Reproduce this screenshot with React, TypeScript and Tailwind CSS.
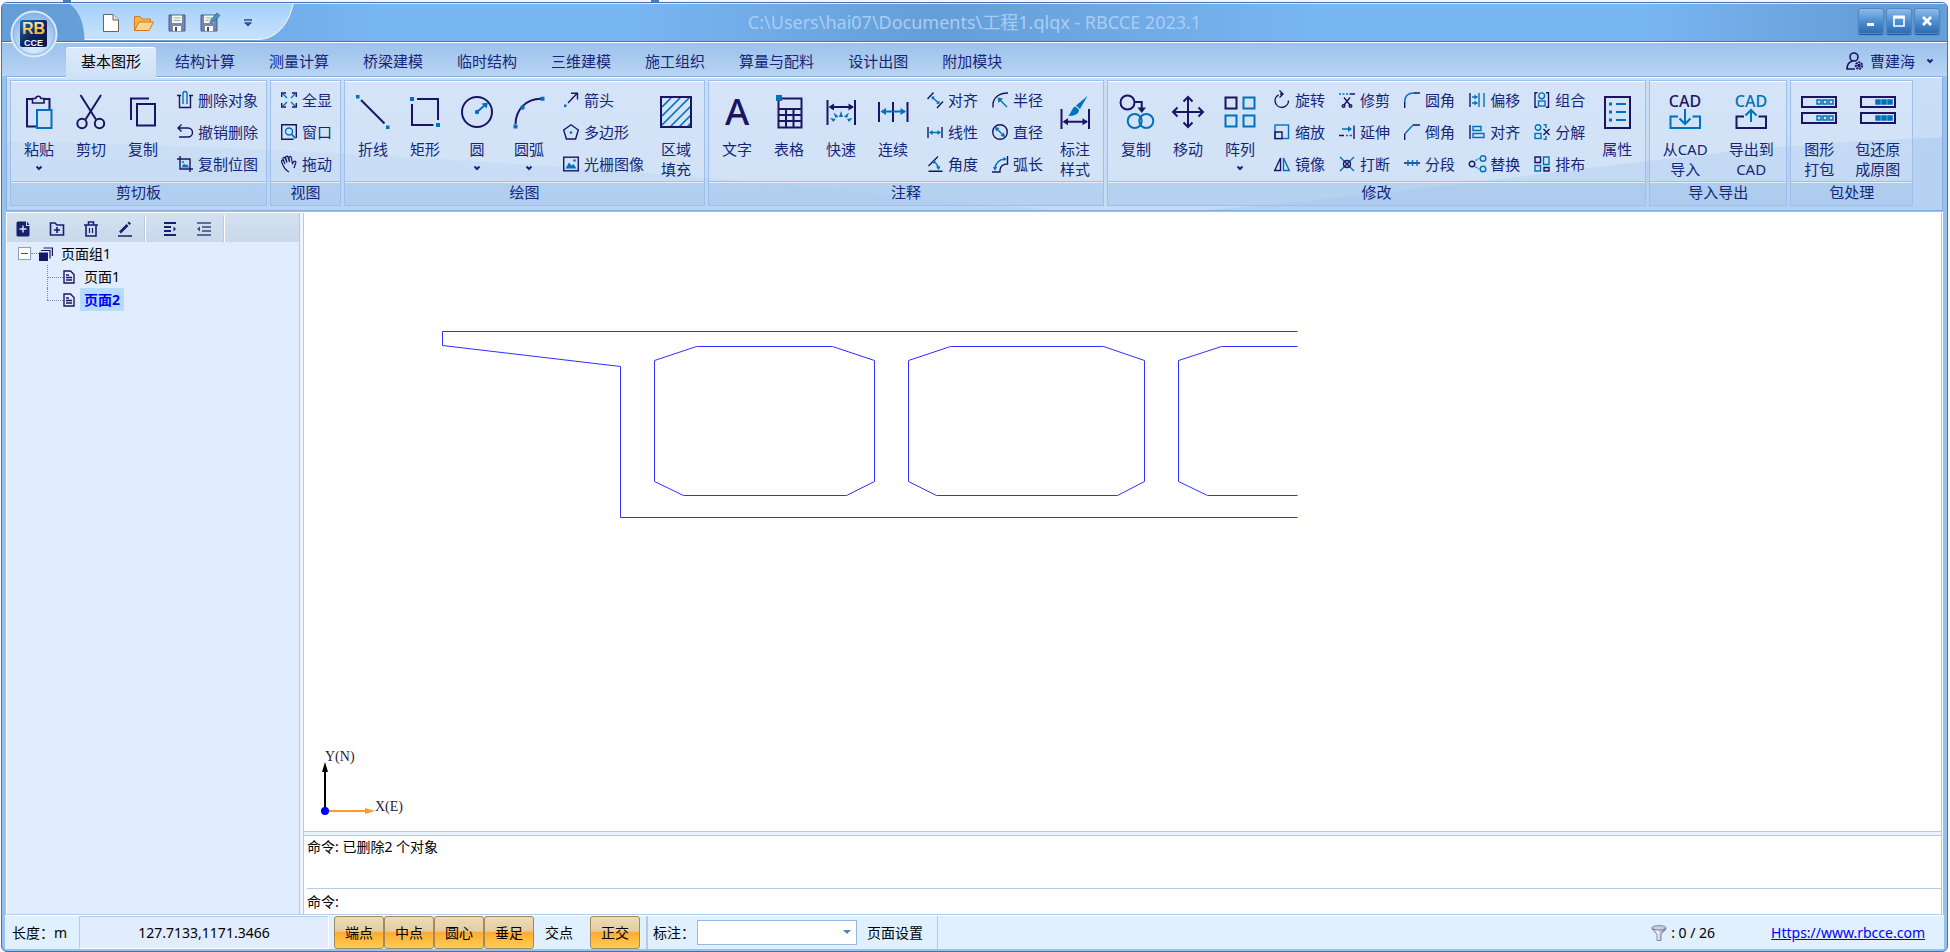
import { useState, type ReactNode } from "react";
import clsx from "clsx";

const D = "#1b1464";
const B = "#0071bc";

type Tool = { label: string; icon: ReactNode };
type BigTool = Tool & { second?: string; menu?: boolean; wide?: string };
type Block = { big: BigTool } | { small: Tool[] };
type Group = { title: string; blocks: Block[] };

const TABS = ["基本图形", "结构计算", "测量计算", "桥梁建模", "临时结构", "三维建模", "施工组织", "算量与配料", "设计出图", "附加模块"];

const lg = (children: ReactNode) => (
  <svg className="size-8 overflow-visible" viewBox="0 0 32 32" fill="none" stroke={D} strokeWidth="2">
    {children}
  </svg>
);

const sm = (children: ReactNode) => (
  <svg className="size-4 shrink-0 overflow-visible" viewBox="0 0 16 16" fill="none" stroke={D} strokeWidth="1.4">
    {children}
  </svg>
);

const cadText = (color: string) => (
  <text x="16" y="10.5" textAnchor="middle" fontSize="16" fontWeight="500" fill={color} stroke="none" fontFamily="'Noto Sans', sans-serif">
    CAD
  </text>
);

// Two stacked drawers, the small squares are hollow (packed) or solid (unpacked)
const drawers = (solid: boolean) =>
  lg(
    <>
      {[1, 17].map((y) => (
        <g key={y}>
          <rect x="-1" y={y} width="34" height="10" />
          {[14, 20, 26].map((x) => (
            <rect key={x} x={x} y={y + 3} width="4" height="4" stroke={B} strokeWidth="1.5" fill={solid ? B : "none"} />
          ))}
        </g>
      ))}
    </>
  );

const GROUPS: Group[] = [
  {
    title: "剪切板",
    blocks: [
      {
        big: {
          label: "粘贴",
          menu: true,
          icon: lg(
            <>
              <path d="M13 30.500H4V3H9M21 3H26.500V13" />
              <path d="M9.500 2.500V7H21V2.500H18A2.800 2.800 0 0 0 12.500 2.500Z" strokeWidth="1.6" />
              <rect x="14" y="14" width="14.500" height="18" stroke={B} />
            </>
          ),
        },
      },
      {
        big: {
          label: "剪切",
          icon: lg(
            <>
              <path d="M5.500-1L21 23.500M26-1L10.500 23.500" />
              <circle cx="7" cy="27.500" r="4.700" />
              <circle cx="24.500" cy="27.500" r="4.700" />
            </>
          ),
        },
      },
      {
        big: {
          label: "复制",
          icon: lg(
            <>
              <path d="M4 24V2.500H22" />
              <rect x="10" y="8" width="18" height="21.500" />
            </>
          ),
        },
      },
      {
        small: [
          { label: "删除对象", icon: sm(<><path d="M0 3.500H4M12 3.500H16M2.500 3.500V15.500H13.500V3.500" /><path d="M6 12V1.500A2 2 0 0 1 10 1.500V12" stroke={B} /></>) },
          { label: "撤销删除", icon: sm(<path d="M4.500 .5L1 4L4.500 7.500M1.500 4H11A4.500 4.500 0 0 1 11 13H2" />) },
          { label: "复制位图", icon: sm(<><path d="M3 0V13H16M0 3H13V16" /><path d="M4.500 11.500L7 7.500L9 9.500L10 8L12 11.500Z" fill={B} stroke="none" /><circle cx="6" cy="6" r="1" fill={B} stroke="none" /></>) },
        ],
      },
    ],
  },
  {
    title: "视图",
    blocks: [
      {
        small: [
          {
            label: "全显",
            icon: sm(
              <>
                <path d="M.7 5V1H5M11 1H15.300V5M15.300 11V15H11M5 15H.7V11" />
                <path d="M1.500 1.500L6 6M14.500 1.500L10 6M14.500 14.500L10 10M1.500 14.500L6 10" stroke={B} />
              </>
            ),
          },
          { label: "窗口", icon: sm(<><path d="M12.500 15.300H.7V.7H15.300V14" /><circle cx="8" cy="7.500" r="3.500" stroke={B} /><path d="M10.500 10L14.500 14.500" stroke={B} strokeWidth="1.800" /></>) },
          {
            label: "拖动",
            icon: sm(
              <path
                d="M8 16C4 14 2 10 .5 5.500C.2 4 2 3.500 2.700 5L4 8L2 3C1.500 1.500 3.500 .8 4.200 2.200L6 6.500L4.500 1.500C4.500 0 6.500-.5 7 1L8.500 6L8 2C8-.2 10-.2 10.300 1.500L11.500 7.500L13 5.500C14.500 4.500 15.500 6 14.500 7.500L13 12"
                strokeWidth="1.200"
              />
            ),
          },
        ],
      },
    ],
  },
  {
    title: "绘图",
    blocks: [
      { big: { label: "折线", icon: lg(<><path d="M4 4L27.500 27.500" /><path d="M-1-1H2.500V2.500H-1ZM29 29.500H32.500V33H29Z" fill={B} stroke="none" /></>) } },
      { big: { label: "矩形", icon: lg(<><path d="M8 3H29V24M3 8V29H24.500" /><path d="M1 1H5V5H1ZM27 27H31V31H27Z" fill={B} stroke="none" /></>) } },
      {
        big: {
          label: "圆",
          menu: true,
          icon: lg(<><circle cx="16" cy="16" r="15" /><path d="M16 16L24 9" stroke={B} /><path d="M27 6.500L20.500 7.500L25.500 12.500Z" fill={B} stroke="none" /><circle cx="16" cy="16" r="2.200" fill={B} stroke="none" /></>),
        },
      },
      {
        big: {
          label: "圆弧",
          menu: true,
          icon: lg(<><path d="M2.500 28C3 13 13 3 28 2.700" /><path d="M.5 28.500H4.500V32.500H.5ZM27.500 .7H31.500V4.700H27.500Z" fill={B} stroke="none" /><circle cx="9.500" cy="11.500" r="2.300" fill={B} stroke="none" /></>),
        },
      },
      {
        small: [
          { label: "箭头", icon: sm(<><path d="M5 11L14 1.500M8 1.300H14.500V7.500M8.500 7L14.500 1.300" /><rect x="1" y="12.500" width="2.500" height="2.500" fill={B} stroke="none" /></>) },
          { label: "多边形", icon: sm(<><path d="M8 .8L15.300 6L12.600 15H3.400L.7 6Z" /><circle cx="8" cy="8.500" r="1.300" fill={B} stroke="none" /></>) },
          { label: "光栅图像", icon: sm(<><rect x=".7" y="1.200" width="14.600" height="13.600" /><path d="M2.500 12.500L6 6.500L8.500 9.500L10.500 8L13.500 12.500Z" fill={B} stroke="none" /><circle cx="11.500" cy="4.500" r="1.300" fill={B} stroke="none" /></>) },
        ],
      },
      {
        big: {
          label: "区域",
          second: "填充",
          icon: lg(
            <>
              <path d="M2 11L11 2M2 20L20 2M2 29L29 2M10 31L31 10M19 31L31 19M27 31L31 27" stroke={B} strokeWidth="1.700" />
              <rect x="1" y="1" width="30" height="30" />
            </>
          ),
        },
      },
    ],
  },
  {
    title: "注释",
    blocks: [
      {
        big: {
          label: "文字",
          icon: lg(
            <text x="16" y="29" textAnchor="middle" fontSize="37" fontWeight="500" fill={D} stroke="none" fontFamily="'Noto Sans', sans-serif">
              A
            </text>
          ),
        },
      },
      { big: { label: "表格", icon: lg(<><path d="M5.500 2.500H28.500V31.500H5.500ZM5.500 13H28.500M5.500 19H28.500M5.500 25H28.500M13 13V31M20.500 13V31" /><path d="M3-1H9V5H3Z" fill={B} stroke="none" /></>) } },
      {
        big: {
          label: "快速",
          icon: lg(
            <>
              <path d="M2.500 4V29M30 4V29M5 11H28" />
              <path d="M3.500 11L9 7.500V14.500ZM29 11L23.500 7.500V14.500Z" fill={D} stroke="none" />
              <path d="M16 15L18 21H14ZM8.500 16.500L13.500 20.500L10.500 22ZM24 16.500L19 20.500L22 22ZM5 22L10.500 23L8.500 26ZM27.500 22L22 23L24 26Z" fill={B} stroke="none" />
            </>
          ),
        },
      },
      { big: { label: "连续", icon: lg(<><path d="M2 6V26M16 6V26M30.500 6V26" /><path d="M5 15.500H28" stroke={B} /><path d="M3.500 15.500L9 12V19ZM29 15.500L23.500 12V19Z" fill={B} stroke="none" /></>) } },
      {
        small: [
          { label: "对齐", icon: sm(<><path d="M.5 7L6.500 .5M10 16L16 9.500" /><path d="M5.500 5.500L11.500 11" stroke={B} /><path d="M4.500 4.500H8L5 8ZM12.500 12V8.500L9 11.500Z" fill={B} stroke="none" /></>) },
          { label: "线性", icon: sm(<><path d="M1 3V14M15 3V14" /><path d="M4 8.500H12" stroke={B} /><path d="M2 8.500L5.500 6V11ZM14 8.500L10.500 6V11Z" fill={B} stroke="none" /></>) },
          { label: "角度", icon: sm(<><path d="M1.500 15.300H15.500M1.500 10L11 .5" /><path d="M7 6C9.500 7.500 11 9.500 11.500 12" stroke={B} /><path d="M5.500 4.500L9 5L6.500 8ZM11.500 14L9 10.500H13.500Z" fill={B} stroke="none" /></>) },
        ],
      },
      {
        small: [
          { label: "半径", icon: sm(<><path d="M1 15.500V12C1.500 6 6.500 1 16 1" /><path d="M15 15L7 7" stroke={B} /><path d="M5.500 5.500L11 6.500L6.500 11Z" fill={B} stroke="none" /></>) },
          { label: "直径", icon: sm(<><circle cx="8" cy="8" r="7.300" /><path d="M4.500 4.500L11.500 11.500" stroke={B} /><path d="M3 3L7.500 4L4 7.500ZM13 13L8.500 12L12 8.500Z" fill={B} stroke="none" /></>) },
          { label: "弧长", icon: sm(<><path d="M0 16H8V14C8.500 10 11 8 15.500 8V0" /><path d="M3 13C3.500 7 7 3.500 13 3" stroke={B} /><path d="M3 15L1 11H5ZM15 3L11.500 1V5Z" fill={B} stroke="none" /></>) },
        ],
      },
      {
        big: {
          label: "标注",
          second: "样式",
          icon: lg(
            <>
              <path d="M2.500 13V33M30 13V33M5 25.700H28" />
              <path d="M3.500 25.700L9 22.200V29.200ZM29 25.700L23.500 22.200V29.200Z" fill={D} stroke="none" />
              <path d="M28.500 0L17 9.500L21 13Z" fill={B} stroke="none" />
              <path d="M16.500 10.500L20 13.700C20 18 15 20.500 9 19.500C12.500 18 12.500 11.500 16.500 10.500Z" fill={B} stroke="none" />
            </>
          ),
        },
      },
    ],
  },
  {
    title: "修改",
    blocks: [
      {
        big: {
          label: "复制",
          icon: lg(
            <>
              <circle cx="7.500" cy="6.500" r="7" />
              <path d="M14.500 6H21.700V13" />
              <path d="M21.700 17L17.500 11.500H26Z" fill={D} stroke="none" />
              <circle cx="14.700" cy="25" r="7" stroke={B} />
              <circle cx="26.300" cy="25" r="7" stroke={B} />
            </>
          ),
        },
      },
      { big: { label: "移动", icon: lg(<path d="M16 1V31M1 16H31M11.500 5.500L16 1L20.500 5.500M11.500 26.500L16 31L20.500 26.500M5.500 11.500L1 16L5.500 20.500M26.500 11.500L31 16L26.500 20.500" />) } },
      { big: { label: "阵列", menu: true, icon: lg(<><rect x="1.500" y="1.500" width="11" height="11" /><path d="M19.500 1.500H30.500V12.500H19.500ZM1.500 19.500H12.500V30.500H1.500ZM19.500 19.500H30.500V30.500H19.500Z" stroke={B} /></>) } },
      {
        small: [
          { label: "旋转", icon: sm(<path d="M6 2H8M4.500 2.800A6.700 6.700 0 1 0 14.500 8.500M5.500-1.500L9 2L5.500 5.500" />) },
          { label: "缩放", icon: sm(<><rect x="1" y="1" width="13.500" height="13.500" stroke={B} /><path d="M1 15.300V8H8V14.600H.5" /></>) },
          { label: "镜像", icon: sm(<><path d="M6.500 2V14.500H.7Z" /><path d="M9.500 2V14.500H15.300Z" stroke={B} /></>) },
        ],
      },
      {
        small: [
          { label: "修剪", icon: sm(<><path d="M0 2H10" stroke={B} strokeDasharray="2 1.500" /><path d="M10.500 2H16M5 5.500L11 13M11 5.500L5 13" /><circle cx="4.500" cy="14" r="1.300" /><circle cx="11.500" cy="14" r="1.300" /></>) },
          { label: "延伸", icon: sm(<><path d="M15 1.500V15M0 11.500H5" /><path d="M3 5H10M7 11.500H9M10.500 11.500H13" stroke={B} /><path d="M13 5L9 2V8Z" fill={B} stroke="none" /></>) },
          { label: "打断", icon: sm(<><path d="M1 1L6 6M15 1L10 6M1 15L6 10M15 15L10 10" stroke={B} /><circle cx="8" cy="8" r="3.500" /><path d="M5 5L11 11M11 5L5 11" /></>) },
        ],
      },
      {
        small: [
          { label: "圆角", icon: sm(<><path d="M.7 16V10M10 1H16" /><path d="M.7 10C.7 4 4 1 10 1" stroke={B} /></>) },
          { label: "倒角", icon: sm(<><path d="M.7 16V10M9 1H16" /><path d="M.7 10L9 1" stroke={B} /></>) },
          { label: "分段", icon: sm(<><path d="M0 7H16" /><path d="M4 4V10M8.500 4V10M13 4V10" stroke={B} /></>) },
        ],
      },
      {
        small: [
          { label: "偏移", icon: sm(<><path d="M1 1V15" /><path d="M10 1V15M15 1V15M3 5H7M3 11H7" stroke={B} /><path d="M9 5L5.500 2.500V7.500ZM9 11L5.500 8.500V13.500Z" fill={B} stroke="none" /></>) },
          { label: "对齐", icon: sm(<><path d="M1 1V15" /><path d="M4 2.500H12V6.500H4ZM4 9.500H15V13.500H4Z" stroke={B} /></>) },
          { label: "替换", icon: sm(<><circle cx="3" cy="8" r="2.800" /><circle cx="14" cy="2.500" r="2.800" stroke={B} /><circle cx="14" cy="13" r="2.800" stroke={B} /><path d="M6.500 4.500L10 2.500M6.500 11L10 13" stroke={B} strokeDasharray="2 1" /></>) },
        ],
      },
      {
        small: [
          { label: "组合", icon: sm(<><path d="M3.500 .7H1V15.300H3.500M12 .7H14.500V15.300H12" /><circle cx="7.700" cy="3.800" r="2.900" stroke={B} /><rect x="4.500" y="9" width="6.500" height="5" stroke={B} /></>) },
          { label: "分解", icon: sm(<><circle cx="4" cy="3.500" r="2.800" stroke={B} /><rect x="1" y="9.500" width="6" height="5" stroke={B} /><path d="M9.500 .7H12V4M12 12V15.300H9.500" stroke={B} /><path d="M9.500 5L15.500 11M15.500 5L9.500 11" /></>) },
          { label: "排布", icon: sm(<><path d="M1 1H6.500V6.500H1ZM10 11.500H15V15H10Z" /><path d="M1 9.500H6.500V15H1ZM9.500 1H15V8.500H9.500Z" stroke={B} /></>) },
        ],
      },
      {
        big: {
          label: "属性",
          icon: lg(
            <>
              <rect x="4" y="1" width="25" height="31" />
              <path d="M8 8H11M8 16H11M8 24H11" stroke={B} strokeWidth="3" />
              <path d="M15 8H25M15 16H25M15 24H25" stroke={B} />
            </>
          ),
        },
      },
    ],
  },
  {
    title: "导入导出",
    blocks: [
      { big: { label: "从CAD", second: "导入", wide: "w-[66px]", icon: lg(<>{cadText(D)}<path d="M9 20.500H1.500V32H31V20.500H23.500M16 13V28M10.500 22.500L16 28L21.500 22.500" stroke={B} /></>) } },
      { big: { label: "导出到", second: "CAD", wide: "w-[66px]", icon: lg(<>{cadText(B)}<path d="M9 20.500H1.500V32H31V20.500H23.500" /><path d="M16 26V14M10.500 19.500L16 14L21.500 19.500" stroke={B} /></>) } },
    ],
  },
  {
    title: "包处理",
    blocks: [
      { big: { label: "图形", second: "打包", icon: drawers(false) } },
      { big: { label: "包还原", second: "成原图", wide: "w-[65px]", icon: drawers(true) } },
    ],
  },
];

const SNAPS = ["端点", "中点", "圆心", "垂足", "交点"];

// Box girder section, drawn from its top left corner
const SECTION_LINES = [
  "855,0 0,0 0,14 178,35 178,186 855,186",
  "212,29 254,15 390,15 432,29 432,150 404,164 241,164 212,150 212,29",
  "466,29 508,15 661,15 702,29 702,150 675,164 494,164 466,150 466,29",
  "855,15 779,15 736,29 736,150 765,164 855,164",
];

function Chevron() {
  return (
    <svg className="h-1 w-1.5 overflow-visible" viewBox="0 0 6 4" fill="none" stroke="#15267a" strokeWidth="2">
      <path d="M.5 .5L3 3L5.500 .5" />
    </svg>
  );
}

function BigButton({ tool }: { tool: BigTool }) {
  return (
    <button className={clsx("flex flex-col items-center pt-[15px] leading-5", tool.wide ?? "w-[52px]")}>
      {tool.icon}
      <span className="mt-[11px] whitespace-nowrap">{tool.label}</span>
      {tool.second && <span className="whitespace-nowrap">{tool.second}</span>}
      {tool.menu && <span className="pt-[7px]"><Chevron /></span>}
    </button>
  );
}

function SmallColumn({ tools }: { tools: Tool[] }) {
  return (
    <div className="ml-0.5 flex flex-col pt-[3px]">
      {tools.map((tool) => (
        <button key={tool.label} className="flex h-8 items-center gap-[5px] px-1.5 leading-5 whitespace-nowrap">
          {tool.icon}
          <span>{tool.label}</span>
        </button>
      ))}
    </div>
  );
}

function RibbonGroup({ group }: { group: Group }) {
  return (
    <section className="flex h-[126px] flex-col border border-[#9dbfe9] bg-white/20 shadow-[inset_0_1px_0_#ffffff]">
      <div className="flex h-[100px] px-0.5">
        {group.blocks.map((block, i) =>
          "big" in block ? <BigButton key={i} tool={block.big} /> : <SmallColumn key={i} tools={block.small} />
        )}
      </div>
      <h2 className="flex-1 border-t border-[#9dbfe9] bg-[#8fb8e6]/40 text-center leading-5 shadow-[inset_0_1px_0_#e2eefb]">
        {group.title}
      </h2>
    </section>
  );
}

function Logo() {
  return (
    <button aria-label="RBCCE" className="absolute top-[7px] left-2 z-10 size-12">
      <svg className="size-full" viewBox="0 0 48 48">
        <defs>
          <radialGradient id="orb" cx=".5" cy=".75" r=".75">
            <stop offset="0" stopColor="#e3f2fe" />
            <stop offset=".6" stopColor="#a9cdf0" />
            <stop offset="1" stopColor="#7eaee0" />
          </radialGradient>
          <linearGradient id="plate" x1="0" y1="0" x2="1" y2="1">
            <stop offset="0" stopColor="#1d6fb6" />
            <stop offset=".5" stopColor="#10255f" />
            <stop offset="1" stopColor="#0c1447" />
          </linearGradient>
          <linearGradient id="gold" x1="0" y1="0" x2="0" y2="1">
            <stop offset="0" stopColor="#ffeec4" />
            <stop offset="1" stopColor="#f5a71c" />
          </linearGradient>
        </defs>
        <circle cx="24" cy="24" r="22.500" fill="url(#orb)" stroke="#d7e9fa" strokeWidth="2" />
        <circle cx="24" cy="24" r="20.500" fill="none" stroke="#8db6e3" />
        <rect x="10" y="10" width="27" height="27" rx="2" fill="url(#plate)" />
        <text x="23.500" y="23.500" textAnchor="middle" fontSize="16" fontWeight="700" fill="url(#gold)" fontFamily="'Liberation Sans', sans-serif">RB</text>
        <text x="23.500" y="35.500" textAnchor="middle" fontSize="9" fontWeight="700" fill="#eef3fb" fontFamily="'Liberation Sans', sans-serif">CCE</text>
      </svg>
    </button>
  );
}

function QuickAccess() {
  return (
    <div className="relative ml-[68px] h-full w-[225px]">
      <svg className="absolute inset-0 size-full" viewBox="0 0 225 37" preserveAspectRatio="none">
        <defs>
          <linearGradient id="qat" x1="0" y1="0" x2="0" y2="1">
            <stop offset="0" stopColor="#a5d0fb" />
            <stop offset="1" stopColor="#c9e2fb" />
          </linearGradient>
        </defs>
        <path d="M0 0C10 8 14 20 14.500 35.500H188C206 35.500 219 20 223 0Z" fill="url(#qat)" />
        <path d="M14.500 35.500H188C206 35.500 219 20 223 0" fill="none" stroke="#f2f8ff" />
      </svg>
      <div className="relative flex h-full items-center gap-3.5 pl-8">
        <button aria-label="新建">
          <svg className="size-[18px]" viewBox="0 0 18 18" fill="#fff" stroke="#6f6457">
            <path d="M1.500 .5H11L16.500 6V17.500H1.500Z" />
            <path d="M11 .5V6H16.500" fill="#e8e3dc" />
          </svg>
        </button>
        <button aria-label="打开">
          <svg className="h-[18px] w-5" viewBox="0 0 20 18" stroke="#d07a1c">
            <path d="M.5 16.500V2.500H6L8 5H16.500V8" fill="#f7b253" />
            <path d="M.5 16.500L5 8H19.500L15 16.500Z" fill="#fdd48c" />
          </svg>
        </button>
        <button aria-label="保存">
          <svg className="size-[18px]" viewBox="0 0 18 18">
            <path d="M1 1H17V17H1Z" fill="#7a86ad" stroke="#4f5b8b" />
            <path d="M4 1.500H14V9H4Z" fill="#f3f6ef" />
            <path d="M5.500 4H12.500M5.500 6.500H12.500" stroke="#9fb59b" />
            <path d="M5 12H13V17H5Z" fill="#fff" />
            <path d="M7 13H9V17H7Z" fill="#3d477a" />
          </svg>
        </button>
        <button aria-label="另存为">
          <svg className="h-[18px] w-5 overflow-visible" viewBox="0 0 20 18">
            <path d="M1 1H17V17H1Z" fill="#7a86ad" stroke="#4f5b8b" />
            <path d="M4 1.500H14V9H4Z" fill="#f3f6ef" />
            <path d="M5.500 4H12.500M5.500 6.500H9" stroke="#9fb59b" />
            <path d="M5 12H13V17H5Z" fill="#fff" />
            <path d="M7 13H9V17H7Z" fill="#3d477a" />
            <path d="M10 9L11 5.500L17-1L20 1.500L13.500 8Z" fill="#4a8fc4" stroke="#2d6798" strokeWidth=".7" />
          </svg>
        </button>
        <button aria-label="自定义" className="ml-2.5">
          <svg className="size-2" viewBox="0 0 8 8" fill="none" stroke="#2a4c8e" strokeWidth="1.500">
            <path d="M0 1H8M1.500 4H6.500L4 6.500Z" />
          </svg>
        </button>
      </div>
    </div>
  );
}

function WindowButtons() {
  const cls =
    "grid size-[26px] place-items-center rounded-[3px] border border-[#4f86c4] bg-linear-to-b from-[#8dbbe8] via-[#4f8fd2] to-[#2f6cb3] shadow-[0_1px_1px_#1f4f8f]";
  return (
    <div className="mr-[7px] flex items-center gap-0.5 pb-1">
      <button aria-label="最小化" className={cls}>
        <svg className="size-3.5" viewBox="0 0 14 14"><path d="M3 10.500H10" stroke="#fff" strokeWidth="3" /></svg>
      </button>
      <button aria-label="最大化" className={cls}>
        <svg className="size-3.5" viewBox="0 0 14 14"><path d="M2 3.500H12V12H2Z" stroke="#fff" fill="none" strokeWidth="1.600" /><path d="M1.200 3H12.800" stroke="#fff" strokeWidth="3" /></svg>
      </button>
      <button aria-label="关闭" className={cls}>
        <svg className="size-3.5" viewBox="0 0 14 14"><path d="M3 3L11 11M11 3L3 11" stroke="#fff" strokeWidth="2.800" /></svg>
      </button>
    </div>
  );
}

function SideToolbar() {
  const icon = "size-4 overflow-visible";
  return (
    <div className="flex h-[29px] items-stretch bg-linear-to-b from-[#d5e1f1] to-[#c9d8ea] pt-0.5">
      <div className="flex items-center gap-[18px] border-r border-white pr-3 pl-2 shadow-[-1px_0_0_#b9cbe2_inset]">
        <button aria-label="添加页面">
          <svg className={icon} viewBox="0 0 16 16"><path d="M3 .5H11V5H14.500V14A1.500 1.500 0 0 1 13 15.500H3A1.500 1.500 0 0 1 1.500 14V2A1.500 1.500 0 0 1 3 .5ZM12 .5L14.500 4H12Z" fill="#15206f" /><path d="M8 4.500V11.500M4.500 8H11.500" stroke="#dfe8f6" strokeWidth="1.400" /></svg>
        </button>
        <button aria-label="添加页面组">
          <svg className={icon} viewBox="0 0 16 16" fill="none" stroke="#15206f" strokeWidth="1.600"><path d="M1.500 2H6L8 4H14.500V14H1.500ZM8 6V12M5 9H11" /></svg>
        </button>
        <button aria-label="删除">
          <svg className={icon} viewBox="0 0 16 16" fill="none" stroke="#15206f" strokeWidth="1.600"><path d="M1 4H15M3 4V15H13V4M5.500 3.500V1H10.500V3.500" /><path d="M6.500 7V12M9.500 7V12" strokeWidth="1.200" /></svg>
        </button>
        <button aria-label="重命名">
          <svg className={icon} viewBox="0 0 16 16" fill="none" stroke="#15206f"><path d="M1 15H15" strokeWidth="1.600" /><path d="M3 11.500L10.500 4" strokeWidth="2.600" /><path d="M11.500 3L13 1.500" strokeWidth="3" /></svg>
        </button>
      </div>
      <div className="flex items-center gap-[18px] border-r border-white pr-3 pl-4 shadow-[-1px_0_0_#b9cbe2_inset]">
        <button aria-label="缩进">
          <svg className={icon} viewBox="0 0 16 16" stroke="#15206f" strokeWidth="1.800"><path d="M2 2H14M2 6H9M2 10H9M2 14H14" /><path d="M11.500 5.500L14 8L11.500 10.500Z" fill="#15206f" stroke="none" /></svg>
        </button>
        <button aria-label="取消缩进">
          <svg className={icon} viewBox="0 0 16 16" stroke="#3a4386" strokeWidth="1.400"><path d="M1 2H15M6 6H15M6 10H15M1 14H15" /><path d="M4 5.500L1 8L4 10.500Z" fill="#3a4386" stroke="none" /></svg>
        </button>
      </div>
    </div>
  );
}

function PageIcon() {
  return (
    <svg className="h-3.5 w-3 shrink-0" viewBox="0 0 12 14" fill="none" stroke={D} strokeWidth="1.400">
      <path d="M1 1H7.500L11 4.500V13H1ZM3 5H6M3 7.500H9M3 10H9" />
    </svg>
  );
}

function PageTree() {
  const [current, setCurrent] = useState("页面2");
  return (
    <ul className="text-sm leading-[23px] text-black">
      <li>
        <div className="flex h-[23px] items-center pl-[11px]">
          <button aria-label="折叠" className="grid size-[13px] place-items-center border border-[#8e9fc4] bg-white">
            <span className="h-px w-[7px] bg-[#3f5593]" />
          </button>
          <span className="w-2 border-t border-dotted border-[#7b87b8]" />
          <svg className="size-3.5" viewBox="0 0 14 14" fill="none" stroke={D} strokeWidth="1.200">
            <path d="M0 5.500H9V14H0Z" fill={D} stroke="none" />
            <path d="M2 3.500H11V11.500M4.500 1H13.400V9" />
          </svg>
          <span className="ml-2">页面组1</span>
        </div>
        <ul className="pl-10">
          {["页面1", "页面2"].map((page) => (
            <li key={page} className="flex h-[23px] items-center">
              <span className="relative h-full w-4">
                <span className={clsx("absolute top-0 left-0 border-l border-dotted border-[#7b87b8]", page === "页面1" ? "h-full" : "h-3")} />
                <span className="absolute top-3 left-0 w-full border-t border-dotted border-[#7b87b8]" />
              </span>
              <PageIcon />
              <button
                onClick={() => setCurrent(page)}
                className={clsx("ml-[5px] h-full px-1", page === current && "bg-[#b5dcff] font-bold text-[#0000ff]")}
              >
                {page}
              </button>
            </li>
          ))}
        </ul>
      </li>
    </ul>
  );
}

function Axes() {
  return (
    <svg className="absolute bottom-0 left-0 h-[90px] w-[110px]" viewBox="0 0 110 90">
      <path d="M21 70V28" stroke="#000" strokeWidth="2" />
      <path d="M21 21L24 31H18Z" fill="#000" />
      <path d="M21 70H64" stroke="#fb9a31" strokeWidth="2" />
      <path d="M71 70L61 67V73Z" fill="#fb9a31" />
      <circle cx="21" cy="70" r="4" fill="#0000ff" />
      <g fontSize="14" fill="#2a1838" fontFamily="'Liberation Serif', serif">
        <text x="21" y="20">Y(N)</text>
        <text x="71" y="70">X(E)</text>
      </g>
    </svg>
  );
}

function StatusBar() {
  const [snaps, setSnaps] = useState<string[]>(["端点", "中点", "圆心", "垂足", "正交"]);
  const toggle = (name: string) =>
    setSnaps((prev) => (prev.includes(name) ? prev.filter((s) => s !== name) : [...prev, name]));

  const snapButton = (name: string) => (
    <button
      key={name}
      aria-pressed={snaps.includes(name)}
      onClick={() => toggle(name)}
      className={clsx(
        "h-full w-[50px] rounded-[3px] border",
        snaps.includes(name)
          ? "border-[#a08a5e] bg-[linear-gradient(#ecdcb8_0%,#e6cda0_45%,#ffab35_50%,#ffc145_80%,#ffc95a_100%)]"
          : "border-transparent"
      )}
    >
      {name}
    </button>
  );

  return (
    <footer className="flex h-[34px] shrink-0 items-stretch border-t border-white bg-[#e0f0fe] text-sm text-black">
      <span className="w-[74px] self-center pl-[7px]">长度：m</span>
      <output className="grid w-[250px] place-items-center border border-[#b5cae6] border-r-white border-b-white bg-[#e1edfe]">
        127.7133,1171.3466
      </output>
      <div className="ml-[5px] flex">
        {SNAPS.map(snapButton)}
        <div className="ml-1.5">{snapButton("正交")}</div>
      </div>
      <div className="ml-1.5 flex items-center border-l-2 border-[#b5cae6] pl-[5px]">
        <label htmlFor="dim-style" className="pr-0.5">标注：</label>
        <span className="relative">
          <select id="dim-style" className="h-[25px] w-40 appearance-none border border-[#95b8e4] bg-white px-2">
            <option></option>
          </select>
          <svg className="pointer-events-none absolute top-2.5 right-1.5 h-1 w-2" viewBox="0 0 8 4"><path d="M0 0H8L4 4Z" fill="#4a83bd" /></svg>
        </span>
        <button className="h-full border-r border-[#b5cae6] pr-3.5 pl-2.5">页面设置</button>
      </div>
      <div className="ml-auto flex items-center pr-[19px]">
        <svg className="size-4" viewBox="0 0 16 16">
          <defs>
            <linearGradient id="funnel" x1="0" y1="0" x2="1" y2="0">
              <stop offset="0" stopColor="#8f95ad" />
              <stop offset=".4" stopColor="#f2f4fa" />
              <stop offset="1" stopColor="#666d8c" />
            </linearGradient>
          </defs>
          <path d="M1 3C1 6 6 7.500 6 10V15.500H10V10C10 7.500 15 6 15 3Z" fill="url(#funnel)" stroke="#6d7393" strokeWidth=".8" />
          <ellipse cx="8" cy="2.800" rx="7" ry="2.200" fill="#c9cddc" stroke="#6d7393" strokeWidth=".8" />
        </svg>
        <span className="ml-1">: 0 / 26</span>
        <a href="Https://www.rbcce.com" className="ml-14 text-[#0000ff] underline">
          Https://www.rbcce.com
        </a>
      </div>
    </footer>
  );
}

export default function App() {
  const [tab, setTab] = useState(TABS[0]);

  return (
    <div className="flex h-screen flex-col bg-white pr-0.5 pl-px font-['Noto_Sans','Noto_Sans_CJK_SC',sans-serif] text-[15px] text-[#15267a]">
      <div className="flex h-0.5 shrink-0 bg-[#f4f6f9] pl-[62px]">
        <span className="w-2 bg-[#4a7fb5]" />
        <span className="ml-[580px] w-2 bg-[#4a7fb5]" />
      </div>

      <div className="relative flex min-h-0 flex-1 flex-col overflow-hidden rounded-md border border-[#4470b5] bg-[#97c1ef] pb-0.5">
        <Logo />

        <header className="relative flex h-[38px] shrink-0 items-center border-t border-[#dcebfb] bg-[linear-gradient(90deg,#659ed6_0%,#659ed6_3%,#79b6f4_20%,#79b6f4_32%,#659ed6_48%,#79b6f4_68%,#79b6f4_84%,#669fd8_96%)]">
          <QuickAccess />
          <h1 className="absolute inset-x-0 mx-auto w-fit text-[18px] text-[#a9cdf5]">
            C:\Users\hai07\Documents\工程1.qlqx - RBCCE 2023.1
          </h1>
          <div className="relative ml-auto">
            <WindowButtons />
          </div>
        </header>

        <nav className="flex h-[35px] shrink-0 items-end gap-1 border-t border-[#4470b5] bg-linear-to-b from-[#9bc1ec] to-[#b8d4f2] pl-16 shadow-[inset_0_1px_0_#ffffff]">
          {TABS.map((name) => (
            <button
              key={name}
              onClick={() => setTab(name)}
              className={clsx(
                "z-1 -mb-0.5 flex h-[31px] justify-center border-t px-[15px] leading-[26px]",
                name === tab ? "rounded-t-[3px] border-white bg-linear-to-b from-[#dceafa] to-[#cfe1f7] text-black" : "border-transparent"
              )}
            >
              {name}
            </button>
          ))}
          <button className="mr-3.5 ml-auto flex h-[30px] items-center gap-1.5">
            <svg className="size-[18px]" viewBox="0 0 18 18" fill="none" stroke={D} strokeWidth="1.600">
              <circle cx="8" cy="5" r="4" />
              <path d="M9 17H1C1 12.500 3 10 6.500 9" />
              <circle cx="13" cy="13.500" r="3.200" strokeWidth="2" strokeDasharray="2 .8" />
              <circle cx="13" cy="13.500" r="1" />
            </svg>
            <span className="mr-1.5">曹建海</span>
            <Chevron />
          </button>
        </nav>

        <div className="relative mx-1 shrink-0 border border-[#85aee3] bg-linear-to-b from-[#cbdef6] to-[#c5dbf5] px-[3px] pt-[3px] pb-1 shadow-[inset_0_1px_0_#ffffff]">
          <svg className="absolute inset-0 size-full" viewBox="0 0 1936 132" preserveAspectRatio="none">
            <path d="M0 64C300 70 500 85 700 100C850 112 950 125 1050 132H0Z" fill="#9cc2ee" opacity=".25" />
            <path d="M1936 60C1700 66 1500 108 1200 132H1936Z" fill="#8db7ea" opacity=".28" />
          </svg>
          <div className="relative flex gap-[3px]">
            {GROUPS.map((group) => (
              <RibbonGroup key={group.title} group={group} />
            ))}
          </div>
        </div>

        <div className="mx-1 mt-px flex min-h-0 flex-1 border border-white border-b-[#b5cae6] bg-white">
          <aside className="w-[293px] shrink-0 border-r border-[#b3c9e6] bg-[#e1edfe]">
            <SideToolbar />
            <PageTree />
          </aside>
          <div className="w-[3px] shrink-0 bg-[#eef5ff]" />
          <main className="flex min-w-0 flex-1 flex-col border-x border-[#b3c9e6]">
            <div className="relative min-h-0 flex-1 overflow-hidden bg-white">
              <svg className="size-full" fill="none" stroke="#3030ff">
                <g transform="translate(138.500 118.500)">
                  {SECTION_LINES.map((points) => (
                    <polyline key={points} points={points} />
                  ))}
                </g>
              </svg>
              <Axes />
            </div>
            <div className="h-[5px] shrink-0 border-y border-[#b5cae6] bg-[#eaf3fe]" />
            <div className="h-[52px] shrink-0 pl-[3px] text-sm leading-[22px] text-black">命令: 已删除2 个对象</div>
            <div className="ml-[3px] flex h-[26px] shrink-0 items-center border-t border-[#b5cae6] text-sm text-black">
              <label htmlFor="command">命令:</label>
              <input id="command" className="ml-1 h-full flex-1 outline-none" />
            </div>
          </main>
        </div>

        <div className="mx-[3px]">
          <StatusBar />
        </div>
      </div>
    </div>
  );
}
